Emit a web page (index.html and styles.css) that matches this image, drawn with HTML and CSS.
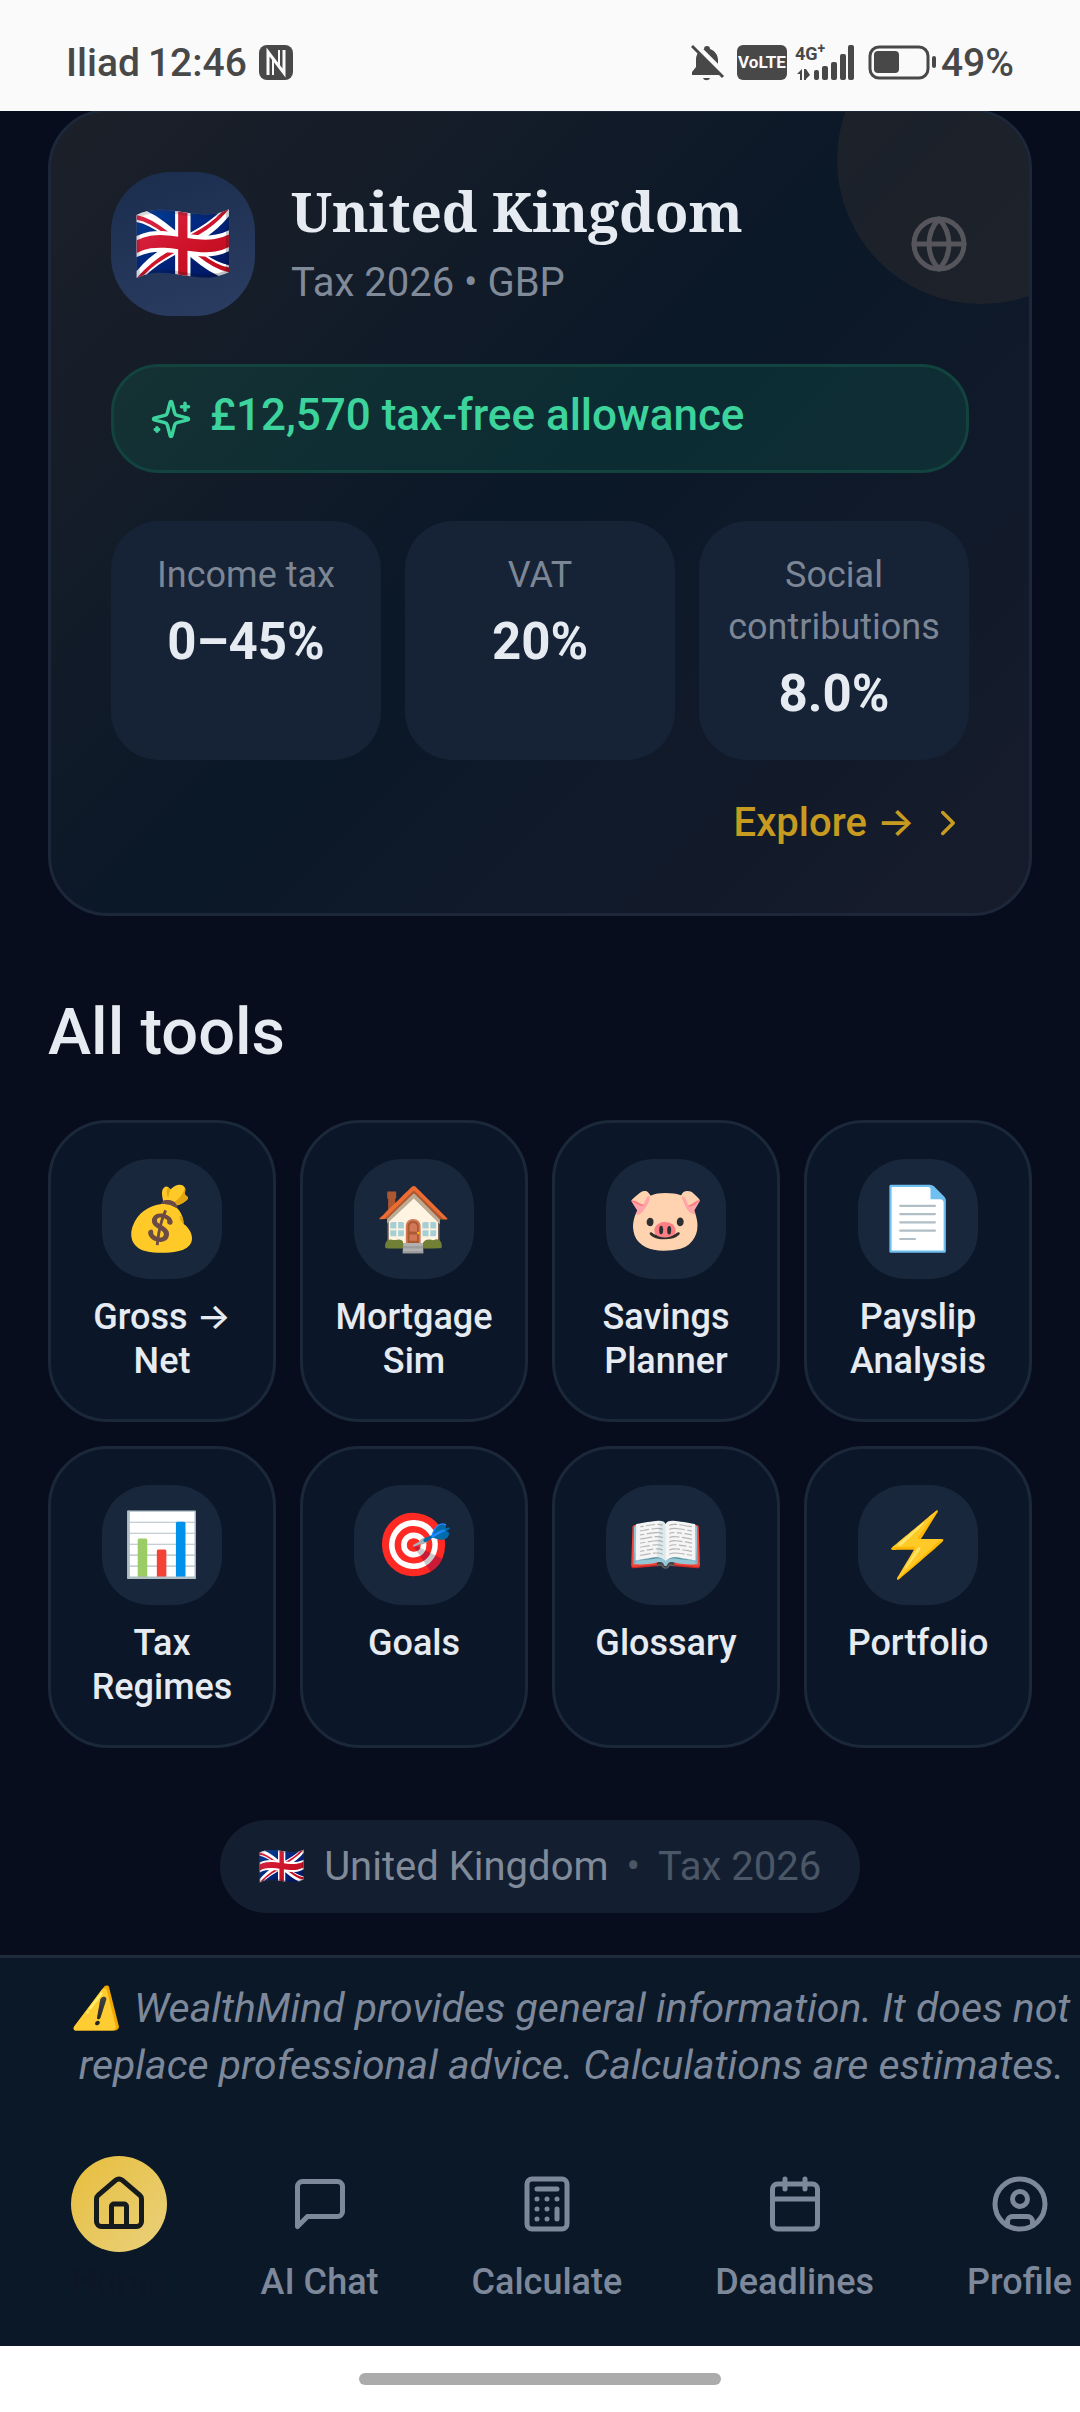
FILE: index.html
```html
<!DOCTYPE html>
<html lang="en">
<head>
    <meta charset="UTF-8">
    <meta name="viewport" content="width=device-width, initial-scale=1">
    <title>WealthMind</title>
    <link rel="stylesheet" href="styles.css">
</head>
<body>
<div class="status-bar">
    <span>Iliad</span>
    <span class="clock">12:46</span>
    <svg class="nfc" viewBox="0 0 34 35">
        <rect x="0" y="0" width="34" height="35" rx="8" fill="#484848"/>
        <path d="M9 30V7l16 21V5" fill="none" stroke="#fafafa" stroke-width="3"/>
        <path d="M14 30V14M20 5v16" fill="none" stroke="#fafafa" stroke-width="2"/>
    </svg>
    <div class="status-right">
        <svg class="bell" viewBox="0 0 34 38">
            <path d="M16 2c2 0 3 1 3 3 5 2 8 6 8 11v5l3 6v4H1v-3l4-5v-7c0-6 3-10 8-11 0-2 1-3 3-3z" fill="#484848"/>
            <path d="M12 34h7c-1 3-6 3-7 0z" fill="#484848"/>
            <path d="M4 1l30 30" stroke="#fafafa" stroke-width="6"/>
            <path d="M1 2l31 31" stroke="#484848" stroke-width="3"/>
        </svg>
        <span class="volte">VoLTE</span>
        <div class="signal">
            <span class="net">4G<sup>+</sup></span>
            <svg viewBox="0 0 59 36" fill="#484848">
                <path d="M2 29l5-5v11H5v-6zM9 24h2l4 6-4 4v1H9z"/>
                <rect x="19" y="25" width="5" height="10" rx="2"/>
                <rect x="27" y="21" width="6" height="14" rx="2"/>
                <rect x="36" y="17" width="6" height="18" rx="2"/>
                <rect x="45" y="9" width="6" height="26" rx="2"/>
                <rect x="53" y="0" width="6" height="35" rx="2"/>
            </svg>
        </div>
        <svg class="battery" viewBox="0 0 69 35">
            <rect x="2" y="2" width="58" height="31" rx="9" fill="none" stroke="#484848" stroke-width="3"/>
            <rect x="6" y="6" width="25" height="22" rx="4" fill="#484848"/>
            <rect x="64" y="11" width="4" height="12" rx="2" fill="#484848"/>
        </svg>
        <span class="percent">49%</span>
    </div>
</div>

<main class="content">
    <section class="country-card">
        <div class="card-glow"></div>
        <div class="country-head">
            <div class="flag-tile">🇬🇧</div>
            <div class="country-name">
                <h1>United Kingdom</h1>
                <p>Tax 2026 • GBP</p>
            </div>
            <svg class="icon globe" viewBox="0 0 24 24">
                <circle cx="12" cy="12" r="10"/>
                <path d="M12 2a14.5 14.5 0 0 0 0 20 14.5 14.5 0 0 0 0-20M2 12h20"/>
            </svg>
        </div>

        <div class="allowance">
            <svg class="icon" viewBox="0 0 24 24">
                <path d="M9.937 15.5A2 2 0 0 0 8.5 14.063l-6.135-1.582a.5.5 0 0 1 0-.962L8.5 9.936A2 2 0 0 0 9.937 8.5l1.582-6.135a.5.5 0 0 1 .963 0L14.063 8.5A2 2 0 0 0 15.5 9.937l6.135 1.581a.5.5 0 0 1 0 .964L15.5 14.063a2 2 0 0 0-1.437 1.437l-1.582 6.135a.5.5 0 0 1-.963 0z"/>
                <path d="M20 3v4M22 5h-4M4 17v2M5 18H3"/>
            </svg>
            <span>£12,570 tax-free allowance</span>
        </div>

        <div class="stats">
            <div class="stat">
                <p class="stat-label">Income tax</p>
                <p class="stat-value">0–45%</p>
            </div>
            <div class="stat">
                <p class="stat-label">VAT</p>
                <p class="stat-value">20%</p>
            </div>
            <div class="stat">
                <p class="stat-label">Social contributions</p>
                <p class="stat-value">8.0%</p>
            </div>
        </div>

        <a class="explore" href="#">
            <span>Explore →</span>
            <svg class="icon" viewBox="0 0 24 24"><path d="m9 18 6-6-6-6"/></svg>
        </a>
    </section>

    <h2>All tools</h2>
    <div class="tools">
        <a class="tool" href="#"><span class="tool-icon">💰</span><span>Gross → Net</span></a>
        <a class="tool" href="#"><span class="tool-icon">🏠</span><span>Mortgage Sim</span></a>
        <a class="tool" href="#"><span class="tool-icon">🐷</span><span>Savings Planner</span></a>
        <a class="tool" href="#"><span class="tool-icon">📄</span><span>Payslip Analysis</span></a>
        <a class="tool" href="#"><span class="tool-icon">📊</span><span>Tax Regimes</span></a>
        <a class="tool" href="#"><span class="tool-icon">🎯</span><span>Goals</span></a>
        <a class="tool" href="#"><span class="tool-icon">📖</span><span>Glossary</span></a>
        <a class="tool" href="#"><span class="tool-icon">⚡</span><span>Portfolio</span></a>
    </div>

    <div class="region-pill">
        <span class="pill-flag">🇬🇧</span>
        <span>United Kingdom</span>
        <span class="dim">•</span>
        <span class="dim">Tax 2026</span>
    </div>
</main>

<footer class="bottom">
    <!-- the tab row is wider than a phone screen and runs off to the right -->
    <div class="bottom-inner">
        <p class="disclaimer">⚠️ WealthMind provides general information. It does not replace professional advice. Calculations are estimates.</p>
        <nav class="tabs">
            <a class="tab active" href="#">
                <span class="tab-icon">
                    <svg class="icon" viewBox="0 0 24 24">
                        <path d="M15 21v-8a1 1 0 0 0-1-1h-4a1 1 0 0 0-1 1v8"/>
                        <path d="M3 10a2 2 0 0 1 .709-1.528l7-5.999a2 2 0 0 1 2.582 0l7 5.999A2 2 0 0 1 21 10v9a2 2 0 0 1-2 2H5a2 2 0 0 1-2-2z"/>
                    </svg>
                </span>
                <span>Home</span>
            </a>
            <a class="tab" href="#">
                <span class="tab-icon">
                    <svg class="icon" viewBox="0 0 24 24">
                        <path d="M21 15a2 2 0 0 1-2 2H7l-4 4V5a2 2 0 0 1 2-2h14a2 2 0 0 1 2 2z"/>
                    </svg>
                </span>
                <span>AI Chat</span>
            </a>
            <a class="tab" href="#">
                <span class="tab-icon">
                    <svg class="icon" viewBox="0 0 24 24">
                        <rect x="4" y="2" width="16" height="20" rx="2"/>
                        <path d="M8 6h8M16 14v4M16 10h.01M12 10h.01M8 10h.01M12 14h.01M8 14h.01M12 18h.01M8 18h.01"/>
                    </svg>
                </span>
                <span>Calculate</span>
            </a>
            <a class="tab" href="#">
                <span class="tab-icon">
                    <svg class="icon" viewBox="0 0 24 24">
                        <rect x="3" y="4" width="18" height="18" rx="2"/>
                        <path d="M8 2v4M16 2v4M3 10h18"/>
                    </svg>
                </span>
                <span>Deadlines</span>
            </a>
            <a class="tab" href="#">
                <span class="tab-icon">
                    <svg class="icon" viewBox="0 0 24 24">
                        <circle cx="12" cy="12" r="10"/>
                        <circle cx="12" cy="10" r="3"/>
                        <path d="M7 20.662V19a2 2 0 0 1 2-2h6a2 2 0 0 1 2 2v1.662"/>
                    </svg>
                </span>
                <span>Profile</span>
            </a>
        </nav>
    </div>
</footer>
<div class="gesture-bar"><span></span></div>
</body>
</html>
```
FILE: styles.css
```css
* {
    box-sizing: border-box;
}

body {
    margin: 0;
    min-height: 100vh;
    display: flex;
    flex-direction: column;
    overflow-x: hidden;
    background-color: #070d1c;
    color: #e6ebf2;
    font-family: Roboto, Inter, 'Noto Color Emoji', sans-serif;
    font-size: 40px;
    line-height: 60px;
}

h1, h2, p {
    margin: 0;
}

a {
    color: inherit;
    text-decoration: none;
}

.icon {
    flex: none;
    fill: none;
    stroke: currentColor;
    stroke-width: 2;
    stroke-linecap: round;
    stroke-linejoin: round;
}

/* status bar */
.status-bar {
    position: relative;
    z-index: 1;
    display: flex;
    align-items: center;
    height: 111px;
    padding: 14px 66px 0;
    background-color: #fafafa;
    color: #484848;
    font-size: 39px;
    font-weight: 500;
}

.clock {
    margin-left: 8px;
}

.nfc {
    width: 34px;
    height: 35px;
    margin-left: 12px;
}

.status-right {
    display: flex;
    align-items: center;
    margin-left: auto;
}

.bell {
    width: 34px;
    height: 38px;
}

.volte {
    width: 50px;
    margin: 0 8px 0 12px;
    border-radius: 6px;
    background-color: #484848;
    color: #fafafa;
    font-size: 17px;
    font-weight: 700;
    line-height: 35px;
    text-align: center;
}

.signal {
    position: relative;
    width: 59px;
    height: 36px;
    margin-right: 14px;
}

.signal svg {
    display: block;
}

.net {
    position: absolute;
    top: 0;
    left: 0;
    font-size: 18px;
    font-weight: 700;
    line-height: 18px;
}

.net sup {
    font-size: 14px;
    line-height: 1px;
}

.battery {
    width: 69px;
    height: 35px;
    margin-right: 4px;
}

/* page */
.content {
    flex: 1;
    padding: 0 48px 40px;
}

.country-card {
    position: relative;
    overflow: hidden;
    margin-top: -2px;
    padding: 60px;
    border: 3px solid #1c2739;
    border-radius: 60px;
    background: linear-gradient(135deg, #1c2029 0%, #0b1828 50%, #171c2b 100%);
}

.card-glow {
    position: absolute;
    top: -96px;
    right: -96px;
    width: 288px;
    height: 288px;
    border-radius: 50%;
    background-color: rgba(212, 140, 80, 0.08);
}

.country-head {
    display: flex;
    align-items: center;
    gap: 36px;
}

.flag-tile {
    display: flex;
    align-items: center;
    justify-content: center;
    width: 144px;
    height: 144px;
    border-radius: 60px;
    background: linear-gradient(160deg, #1b2d4d, #2b3d62);
    font-size: 80px;
}

.country-name {
    flex: 1;
}

.country-name h1 {
    font-family: 'Noto Serif', serif;
    font-size: 55px;
    font-weight: 700;
    line-height: 78px;
}

.country-name p {
    color: #808a99;
    line-height: 66px;
}

.globe {
    width: 60px;
    height: 60px;
    color: #4a515d;
}

.allowance {
    display: flex;
    align-items: center;
    gap: 18px;
    margin-top: 48px;
    padding: 23px 36px;
    border: 3px solid #12433f;
    border-radius: 48px;
    background-color: rgba(16, 185, 129, 0.13);
    color: #3dd39c;
    font-size: 44px;
    font-weight: 500;
    line-height: 63px;
}

.allowance .icon {
    width: 42px;
    height: 42px;
}

.allowance span {
    margin-top: -6px;
}

.stats {
    display: grid;
    grid-template-columns: repeat(3, 1fr);
    gap: 24px;
    margin-top: 48px;
}

.stat {
    padding: 28px 24px;
    border-radius: 48px;
    background-color: #162235;
    text-align: center;
}

.stat-label {
    color: #7c8695;
    font-size: 36px;
    line-height: 52px;
}

.stat-value {
    margin-top: 2px;
    font-size: 51px;
    font-weight: 700;
    line-height: 77px;
}

.explore {
    display: flex;
    align-items: center;
    justify-content: flex-end;
    gap: 12px;
    margin-top: 33px;
    color: #c79b20;
    font-weight: 500;
}

.explore .icon {
    width: 42px;
    height: 42px;
}

h2 {
    margin: 68px 0 40px;
    font-size: 65px;
    font-weight: 500;
    line-height: 96px;
}

.tools {
    display: grid;
    grid-template-columns: repeat(4, 1fr);
    gap: 24px;
}

.tool {
    display: flex;
    flex-direction: column;
    align-items: center;
    gap: 16px;
    padding: 36px 24px;
    border: 3px solid #1b283a;
    border-radius: 60px;
    background-color: #0b1728;
    font-size: 36px;
    font-weight: 500;
    line-height: 44px;
    text-align: center;
}

.tool-icon {
    display: flex;
    align-items: center;
    justify-content: center;
    width: 120px;
    height: 120px;
    border-radius: 48px;
    background-color: #19273c;
    font-size: 62px;
}

.region-pill {
    display: flex;
    align-items: center;
    gap: 18px;
    width: fit-content;
    margin: 72px auto 0;
    padding: 18px 39px;
    border-radius: 48px;
    background-color: #131f30;
    color: #808a99;
    line-height: 57px;
}

.pill-flag {
    font-size: 38px;
}

.dim {
    color: #4b5666;
}

/* bottom navigation */
.bottom {
    overflow: hidden;
    border-top: 3px solid #1e2b3c;
    background-color: #0b1828;
    color: #7d889b;
}

.bottom-inner {
    width: max-content;
    min-width: 100%;
    padding: 22px 71px 40px;
}

.disclaimer {
    width: 0;
    min-width: 100%;
    font-size: 41px;
    font-style: italic;
    line-height: 57px;
    text-align: center;
}

.tabs {
    display: flex;
    justify-content: space-between;
    gap: 93px;
    margin-top: 62px;
}

.tab {
    display: flex;
    flex-direction: column;
    align-items: center;
    gap: 6px;
    font-size: 36px;
    font-weight: 500;
    line-height: 48px;
}

.tab-icon {
    display: flex;
    align-items: center;
    justify-content: center;
    width: 96px;
    height: 96px;
    border-radius: 50%;
}

.tab-icon .icon {
    width: 60px;
    height: 60px;
}

.tab.active {
    color: #0d1624;
}

.tab.active .tab-icon {
    background: linear-gradient(135deg, #e7bd3c, #e9d17c);
    color: #151a1c;
}

.gesture-bar {
    display: flex;
    justify-content: center;
    padding: 27px 0;
    background-color: #ffffff;
}

.gesture-bar span {
    width: 362px;
    height: 12px;
    border-radius: 6px;
    background-color: #ababab;
}
```
